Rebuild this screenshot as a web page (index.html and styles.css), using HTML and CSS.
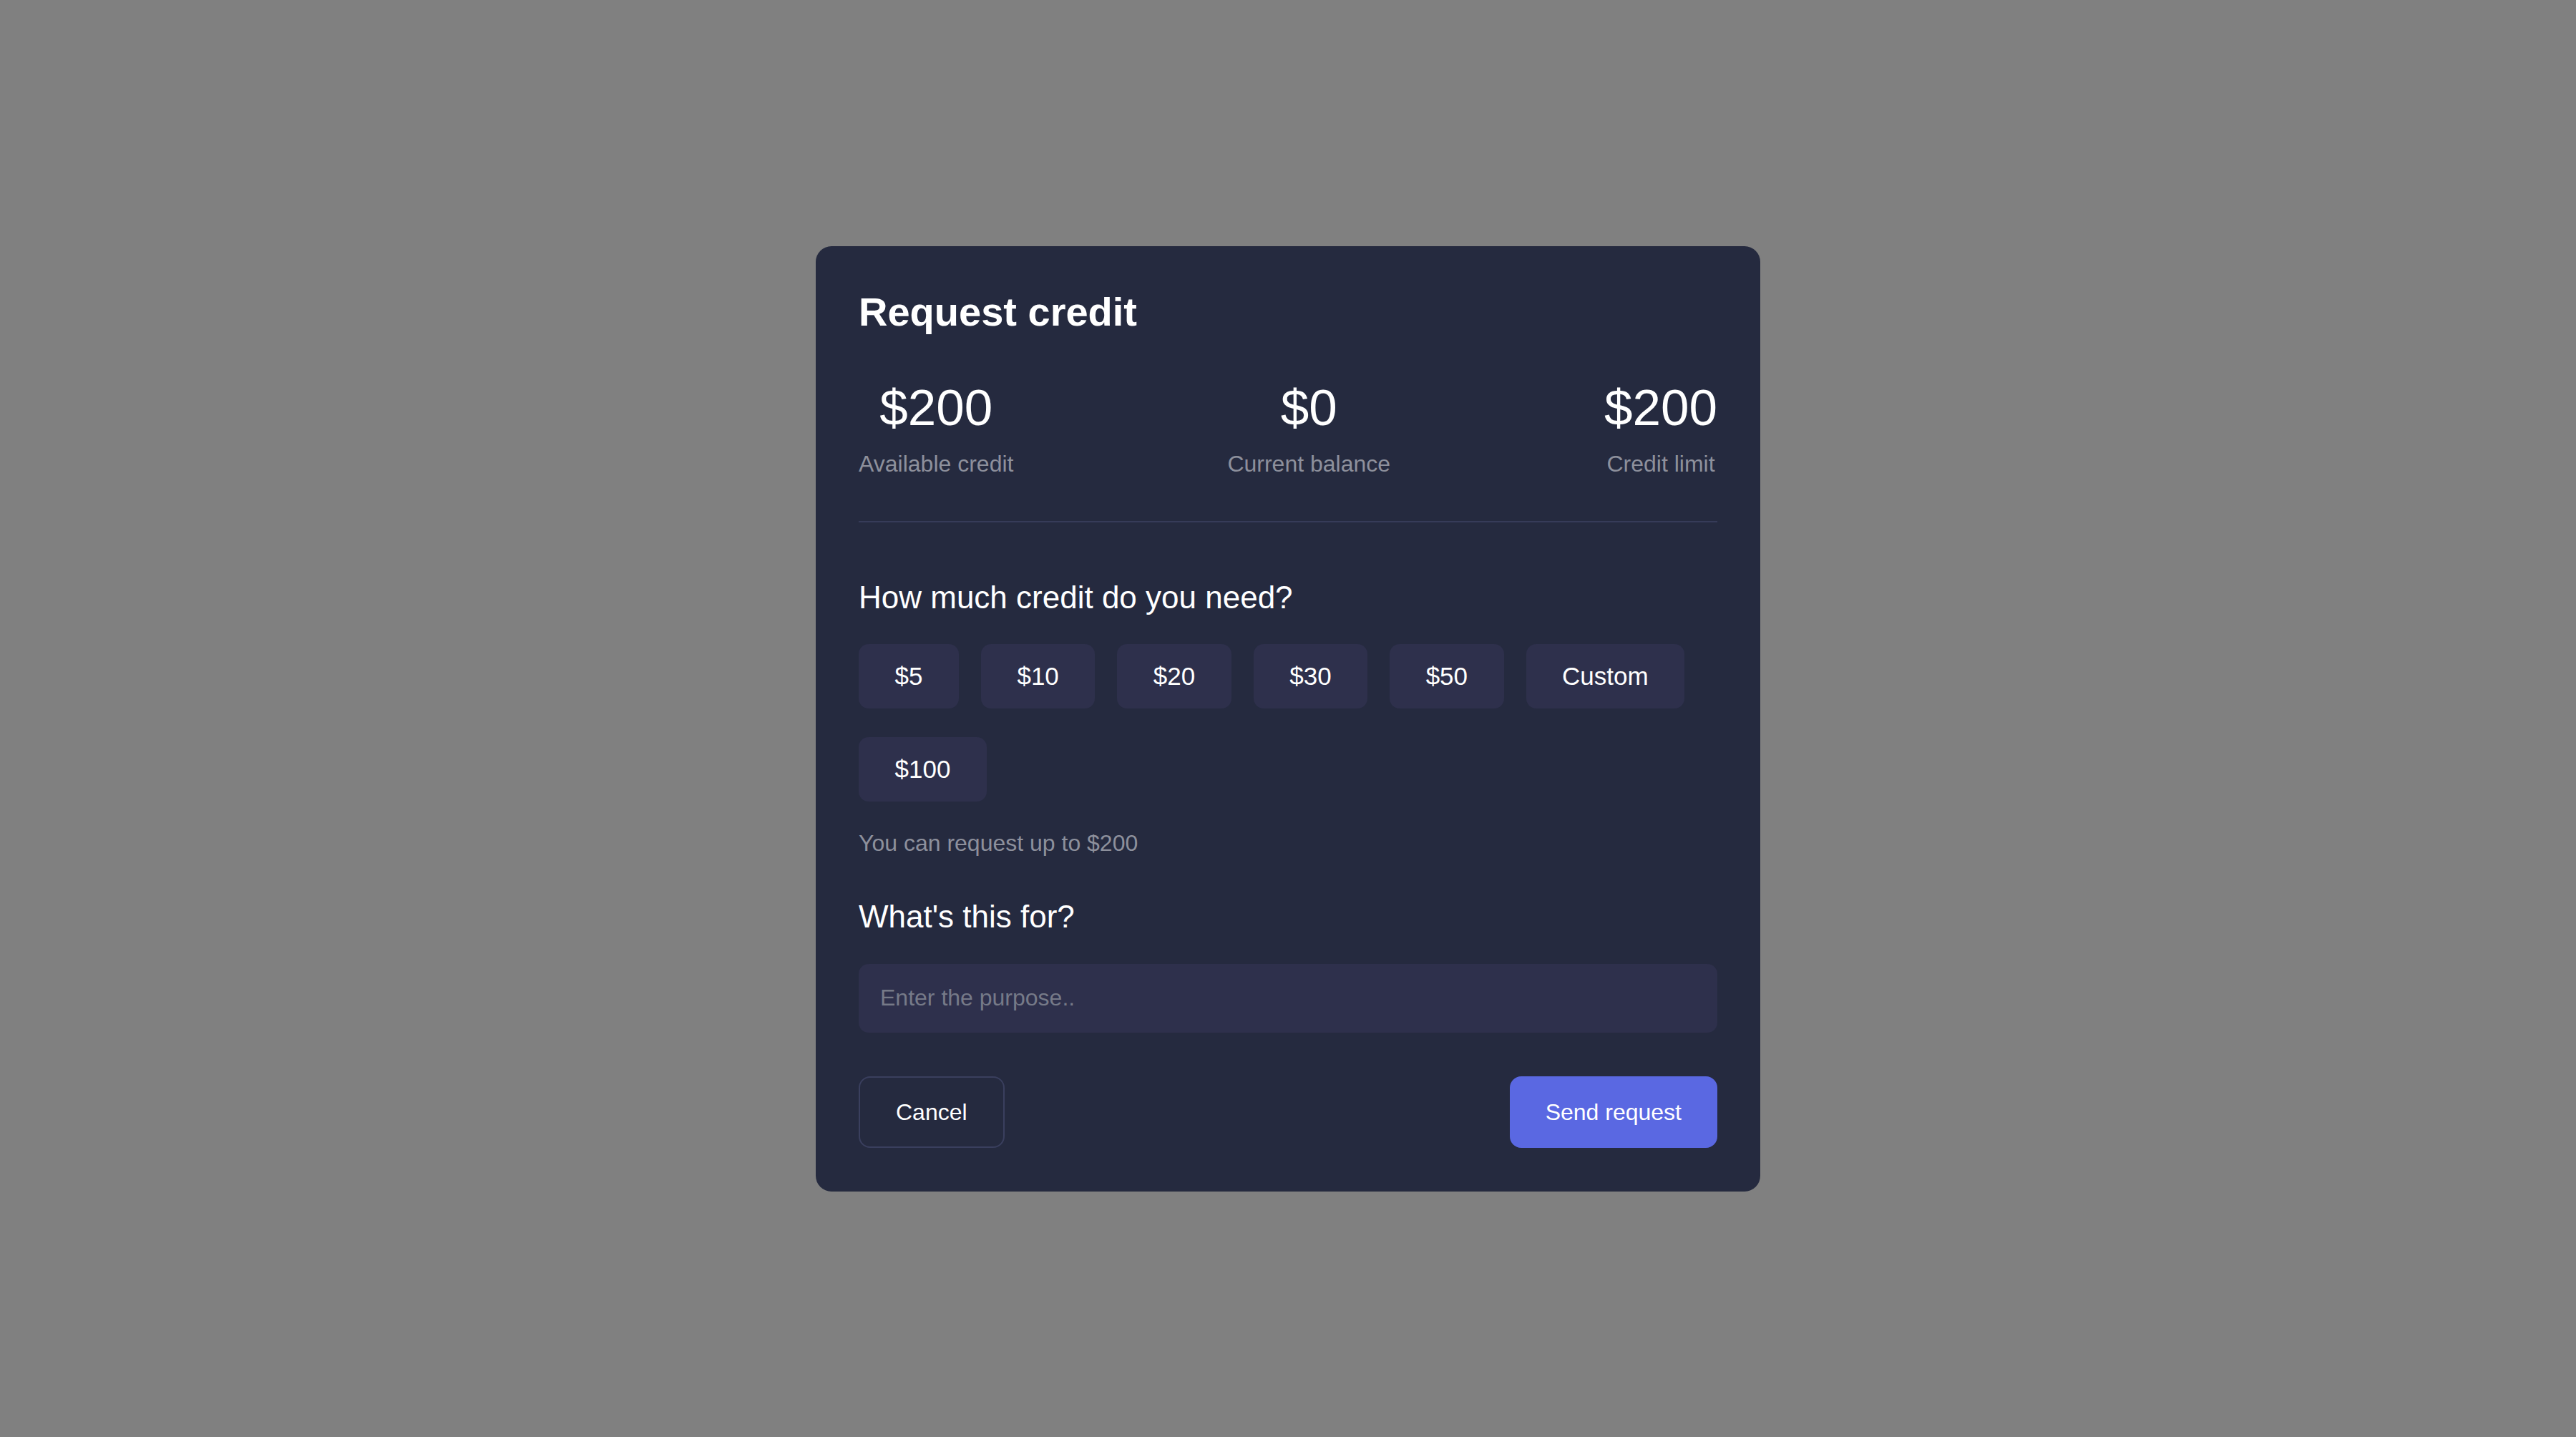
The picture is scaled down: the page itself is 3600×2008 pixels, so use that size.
FILE: index.html
```html
<!DOCTYPE html>
<html lang="en">
<head>
<meta charset="utf-8">
<title>Request credit</title>
<link rel="stylesheet" href="styles.css">
</head>
<body>
<div class="backdrop">
  <div class="modal">
    <h1 class="modal-title">Request credit</h1>

    <div class="stats">
      <div class="stat">
        <div class="stat-value">$200</div>
        <div class="stat-label">Available credit</div>
      </div>
      <div class="stat">
        <div class="stat-value">$0</div>
        <div class="stat-label">Current balance</div>
      </div>
      <div class="stat">
        <div class="stat-value">$200</div>
        <div class="stat-label">Credit limit</div>
      </div>
    </div>

    <h2 class="section-title first">How much credit do you need?</h2>
    <div class="amounts">
      <button class="amount">$5</button>
      <button class="amount">$10</button>
      <button class="amount">$20</button>
      <button class="amount">$30</button>
      <button class="amount">$50</button>
      <button class="amount">Custom</button>
      <button class="amount">$100</button>
    </div>
    <p class="hint">You can request up to $200</p>

    <h2 class="section-title">What's this for?</h2>
    <input class="purpose" type="text" placeholder="Enter the purpose..">

    <div class="actions">
      <button class="btn btn-cancel">Cancel</button>
      <button class="btn btn-primary">Send request</button>
    </div>
  </div>
</div>
</body>
</html>
```
FILE: styles.css
```css
* {
  box-sizing: border-box;
}

html, body {
  margin: 0;
  padding: 0;
  height: 100%;
}

body {
  background: #808080;
  font-family: "Liberation Sans", Arial, Helvetica, sans-serif;
  color: #ffffff;
}

.backdrop {
  min-height: 100vh;
  display: flex;
  align-items: center;
  justify-content: center;
}

.modal {
  width: 1320px;
  background: #252a3f;
  border-radius: 22px;
  padding: 60px 60px 61px;
  display: flex;
  flex-direction: column;
}

.modal-title {
  margin: 0;
  font-size: 56px;
  line-height: 64px;
  font-weight: 700;
}

/* summary of available / balance / limit */
.stats {
  margin-top: 62px;
  padding-bottom: 60px;
  border-bottom: 2px solid #363b58;
  display: flex;
  justify-content: space-between;
}

.stat {
  text-align: center;
}

.stat-value {
  font-size: 71px;
  line-height: 80px;
}

.stat-label {
  margin-top: 18px;
  font-size: 32px;
  line-height: 40px;
  color: #8d909c;
}

.section-title {
  margin: 57px 0 0;
  font-size: 44px;
  line-height: 52px;
  font-weight: 400;
}

.section-title.first {
  margin-top: 79px;
}

.amounts {
  margin-top: 39px;
  display: flex;
  flex-wrap: wrap;
  column-gap: 31px;
  row-gap: 40px;
}

.amount {
  font-family: inherit;
  font-size: 35px;
  line-height: 40px;
  padding: 25px 50.5px;
  background: #2e304c;
  color: #ffffff;
  border: none;
  border-radius: 14px;
}

.hint {
  margin: 38px 0 0;
  font-size: 32px;
  line-height: 40px;
  color: #8d909c;
}

.purpose {
  margin-top: 40px;
  width: 100%;
  height: 96px;
  padding: 0 30px;
  font-family: inherit;
  font-size: 32px;
  background: #2e304c;
  color: #ffffff;
  border: none;
  border-radius: 14px;
  outline: none;
}

.purpose::placeholder {
  color: #767a88;
}

.actions {
  margin-top: 61px;
  display: flex;
  justify-content: space-between;
}

.btn {
  font-family: inherit;
  font-size: 32px;
  line-height: 40px;
  color: #ffffff;
  border-radius: 16px;
}

.btn-cancel {
  padding: 28px 50px;
  background: transparent;
  border: 2px solid #3a3f5e;
}

.btn-primary {
  padding: 30px 50px;
  background: #5a68e2;
  border: none;
}
```
